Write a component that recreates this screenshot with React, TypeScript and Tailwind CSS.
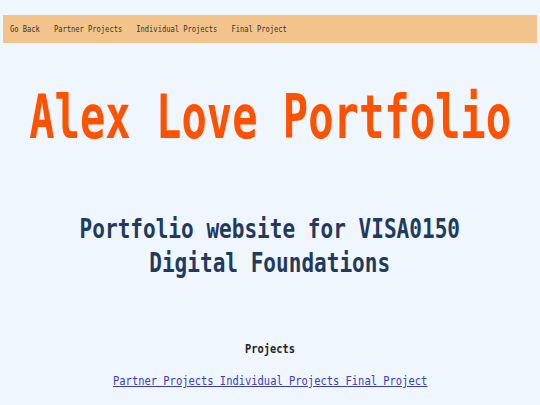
import React from "react";

export default function App() {
  return (
    <div className="w-[540px] h-[405px] bg-[#eff6fd] overflow-hidden font-['DejaVu_Sans_Mono',monospace] flex flex-col">
      <nav className="mt-[15px] mx-[3px] h-[28px] bg-[#f2c48b] flex items-center pl-[7px]">
        <div className="flex items-center gap-[19px] origin-left scale-x-[0.745] text-[9.5px] text-[#333333] whitespace-nowrap">
          <span>Go Back</span>
          <span>Partner Projects</span>
          <span>Individual Projects</span>
          <span>Final Project</span>
        </div>
      </nav>
      <div className="mt-[39px] h-[70px] leading-[70px] flex justify-center whitespace-nowrap">
        <span className="shrink-0 inline-block scale-x-[0.702] text-[60px] font-bold text-[#ff5200]">Alex Love Portfolio</span>
      </div>
      <div className="mt-[60px] flex flex-col items-center whitespace-nowrap text-[#1f3a5e] font-bold text-[26px]">
        <div className="h-[34px] leading-[34px]">
          <span className="inline-block scale-x-[0.81]">Portfolio website for VISA0150</span>
        </div>
        <div className="h-[34px] leading-[34px]">
          <span className="inline-block scale-x-[0.81]">Digital Foundations</span>
        </div>
      </div>
      <div className="mt-[59px] h-[20px] leading-[20px] flex justify-center whitespace-nowrap font-bold text-[12.5px] text-[#222222]">
        <span className="inline-block scale-x-[0.83]">Projects</span>
      </div>
      <div className="mt-[12px] h-[20px] leading-[20px] flex justify-center whitespace-nowrap text-[12.5px] text-[#3b3bc4]">
        <span className="inline-block scale-x-[0.835] underline">
          <a href="#">Partner Projects </a>
          <a href="#">Individual Projects </a>
          <a href="#">Final Project</a>
        </span>
      </div>
    </div>
  );
}
